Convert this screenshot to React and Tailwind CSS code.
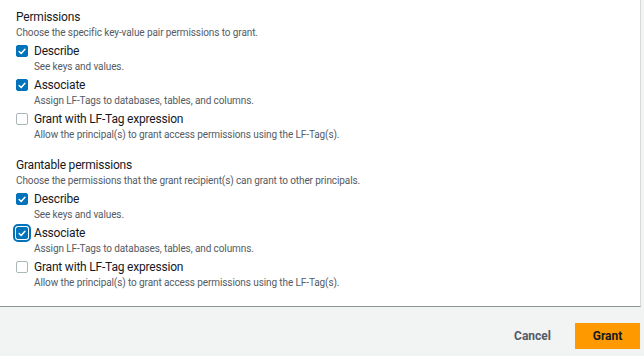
import { useState } from "react";

const opts = [
  { key: "describe", label: "Describe", desc: "See keys and values." },
  { key: "associate", label: "Associate", desc: "Assign LF-Tags to databases, tables, and columns." },
  { key: "expr", label: "Grant with LF-Tag expression", desc: "Allow the principal(s) to grant access permissions using the LF-Tag(s)." },
];

function Box({ checked, focused, onClick }) {
  return (
    <button
      type="button"
      onClick={onClick}
      className={`flex h-[12px] w-[12px] shrink-0 items-center justify-center rounded-[2px] border ${
        checked ? "border-[#0073bb] bg-[#0073bb]" : "border-[#aab7b8] bg-white"
      } ${focused ? "outline outline-2 outline-offset-[1px] outline-[#0073bb]" : ""}`}
    >
      {checked && (
        <svg viewBox="0 0 12 12" className="h-[11px] w-[11px]">
          <path d="M2.6 6.1 5 8.5 9.5 3.3" fill="none" stroke="white" strokeWidth="1.8" strokeLinecap="round" strokeLinejoin="round" />
        </svg>
      )}
    </button>
  );
}

function Group({ title, hint, state, setState, focusKey }) {
  return (
    <div>
      <h3 className="text-[12px] leading-[16px] tracking-[-0.2px] text-[#16191f]">{title}</h3>
      <p className="mt-[1px] text-[10px] leading-[14px] tracking-[-0.1px] text-[#545b64]">{hint}</p>
      <div className="mt-[3px] flex flex-col gap-[3px]">
        {opts.map((o) => (
          <div key={o.key} className="flex gap-[6px]">
            <div className="pt-[2px]">
              <Box
                checked={state[o.key]}
                focused={focusKey === o.key}
                onClick={() => setState({ ...state, [o.key]: !state[o.key] })}
              />
            </div>
            <div>
              <div className="text-[12px] leading-[16px] tracking-[-0.2px] text-[#16191f]">{o.label}</div>
              <div className="mt-[1px] text-[10px] leading-[14px] tracking-[-0.1px] text-[#545b64]">{o.desc}</div>
            </div>
          </div>
        ))}
      </div>
    </div>
  );
}

export default function App() {
  const [perm, setPerm] = useState({ describe: true, associate: true, expr: false });
  const [grant, setGrant] = useState({ describe: true, associate: true, expr: false });

  return (
    <div className="h-[356px] w-[644px] bg-[#f2f3f3] font-['Roboto',sans-serif]">
      <div className="h-[307px] w-[641px] border-b border-r border-b-[#879596] border-r-[#d5dbdb] bg-white px-[16px] pt-[9px]">
        <Group title="Permissions" hint="Choose the specific key-value pair permissions to grant." state={perm} setState={setPerm} />
        <div className="mt-[15px]">
          <Group
            title="Grantable permissions"
            hint="Choose the permissions that the grant recipient(s) can grant to other principals."
            state={grant}
            setState={setGrant}
            focusKey="associate"
          />
        </div>
      </div>
      <div className="flex items-center justify-end gap-[24px] pr-[4px] pt-[16px]">
        <button type="button" className="text-[12px] font-bold text-[#545b64]">Cancel</button>
        <button type="button" className="h-[26px] w-[65px] bg-[#ff9900] text-[12px] font-bold text-[#16191f]">Grant</button>
      </div>
    </div>
  );
}
